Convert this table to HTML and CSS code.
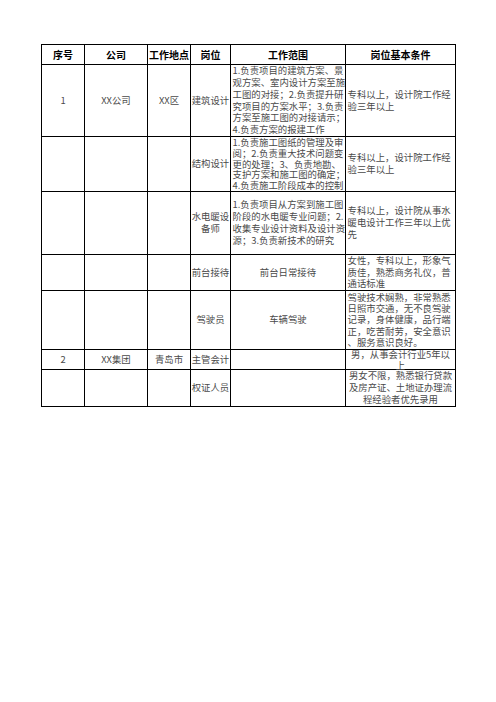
FILE: index.html
```html
<!DOCTYPE html>
<html lang="zh">
<head>
<meta charset="utf-8">
<title>岗位表</title>
<link rel="stylesheet" href="styles.css">
</head>
<body>
<div class="sheet">
<table class="grid">
  <colgroup>
    <col class="w-no"><col class="w-co"><col class="w-loc"><col class="w-pos"><col class="w-scope"><col class="w-req">
  </colgroup>
  <tr class="h-head">
    <th><div class="cell">序号</div></th>
    <th><div class="cell">公司</div></th>
    <th><div class="cell">工作地点</div></th>
    <th><div class="cell">岗位</div></th>
    <th><div class="cell">工作范围</div></th>
    <th><div class="cell">岗位基本条件</div></th>
  </tr>
  <tr class="h-r1">
    <td><div class="cell mid">1</div></td>
    <td><div class="cell mid">XX公司</div></td>
    <td><div class="cell mid">XX区</div></td>
    <td><div class="cell mid">建筑设计</div></td>
    <td><div class="cell left">1.负责项目的建筑方案、景<br>观方案、室内设计方案至施<br>工图的对接；2.负责提升研<br>究项目的方案水平；3.负责<br>方案至施工图的对接请示；<br>4.负责方案的报建工作</div></td>
    <td><div class="cell left">专科以上，设计院工作经<br>验三年以上</div></td>
  </tr>
  <tr class="h-r2">
    <td><div class="cell mid"></div></td>
    <td><div class="cell mid"></div></td>
    <td><div class="cell mid"></div></td>
    <td><div class="cell mid">结构设计</div></td>
    <td><div class="cell left tight">1.负责施工图纸的管理及审<br>阅；2.负责重大技术问题变<br>更的处理；3、负责地勘、<br>支护方案和施工图的确定；<br>4.负责施工阶段成本的控制</div></td>
    <td><div class="cell left">专科以上，设计院工作经<br>验三年以上</div></td>
  </tr>
  <tr class="h-r3">
    <td><div class="cell mid"></div></td>
    <td><div class="cell mid"></div></td>
    <td><div class="cell mid"></div></td>
    <td><div class="cell mid">水电暖设<br>备师</div></td>
    <td><div class="cell left">1.负责项目从方案到施工图<br>阶段的水电暖专业问题；2.<br>收集专业设计资料及设计资<br>源；3.负责新技术的研究</div></td>
    <td><div class="cell left">专科以上，设计院从事水<br>暖电设计工作三年以上优<br>先</div></td>
  </tr>
  <tr class="h-r4">
    <td><div class="cell mid"></div></td>
    <td><div class="cell mid"></div></td>
    <td><div class="cell mid"></div></td>
    <td><div class="cell mid">前台接待</div></td>
    <td><div class="cell mid">前台日常接待</div></td>
    <td><div class="cell left">女性，专科以上，形象气<br>质佳，熟悉商务礼仪，普<br>通话标准</div></td>
  </tr>
  <tr class="h-r5">
    <td><div class="cell mid"></div></td>
    <td><div class="cell mid"></div></td>
    <td><div class="cell mid"></div></td>
    <td><div class="cell mid">驾驶员</div></td>
    <td><div class="cell mid">车辆驾驶</div></td>
    <td><div class="cell left snug">驾驶技术娴熟，非常熟悉<br>日照市交通，无不良驾驶<br>记录，身体健康，品行端<br>正，吃苦耐劳，安全意识<br>、服务意识良好。</div></td>
  </tr>
  <tr class="h-r6">
    <td><div class="cell mid">2</div></td>
    <td><div class="cell mid">XX集团</div></td>
    <td><div class="cell mid">青岛市</div></td>
    <td><div class="cell mid">主管会计</div></td>
    <td><div class="cell mid"></div></td>
    <td><div class="cell mid squeeze">男，从事会计行业5年以<br>上</div></td>
  </tr>
  <tr class="h-r7">
    <td><div class="cell mid"></div></td>
    <td><div class="cell mid"></div></td>
    <td><div class="cell mid"></div></td>
    <td><div class="cell mid">权证人员</div></td>
    <td><div class="cell mid"></div></td>
    <td><div class="cell mid">男女不限，熟悉银行贷款<br>及房产证、土地证办理流<br>程经验者优先录用</div></td>
  </tr>
</table>
</div>
</body>
</html>
```

FILE: styles.css
```css
html, body {
  margin: 0;
  padding: 0;
  background: #ffffff;
}

.sheet {
  padding: 44px 0 0 41px;
}

.grid {
  border-collapse: collapse;
  table-layout: fixed;
  width: 414px;
  font-family: "Noto Sans CJK SC", "Noto Sans", sans-serif;
}

.w-no { width: 43px; }
.w-co { width: 63px; }
.w-loc { width: 43px; }
.w-pos { width: 40px; }
.w-scope { width: 115px; }
.w-req { width: 110px; }

.grid th,
.grid td {
  border: 1px solid #000;
  padding: 0;
  vertical-align: middle;
}

.cell {
  display: flex;
  flex-direction: column;
  justify-content: center;
  overflow: visible;
  white-space: nowrap;
  font-size: 9.4px;
  line-height: 11.8px;
  color: #4a4a4a;
  letter-spacing: 0;
}

.grid th .cell {
  font-size: 10px;
  font-weight: 700;
  color: #000;
  text-align: center;
}

.mid {
  text-align: center;
}

.left {
  text-align: left;
  padding: 0 1px 0 1.5px;
}

.tight {
  line-height: 10.8px;
}

.snug {
  line-height: 11.3px;
}

.squeeze {
  line-height: 11px;
}

.h-head .cell { height: 19px; }
.h-r1 .cell { height: 71px; }
.h-r2 .cell { height: 54px; }
.h-r3 .cell { height: 62px; }
.h-r4 .cell { height: 35px; }
.h-r5 .cell { height: 58px; }
.h-r6 .cell { height: 19px; }
.h-r7 .cell { height: 36px; }
```
